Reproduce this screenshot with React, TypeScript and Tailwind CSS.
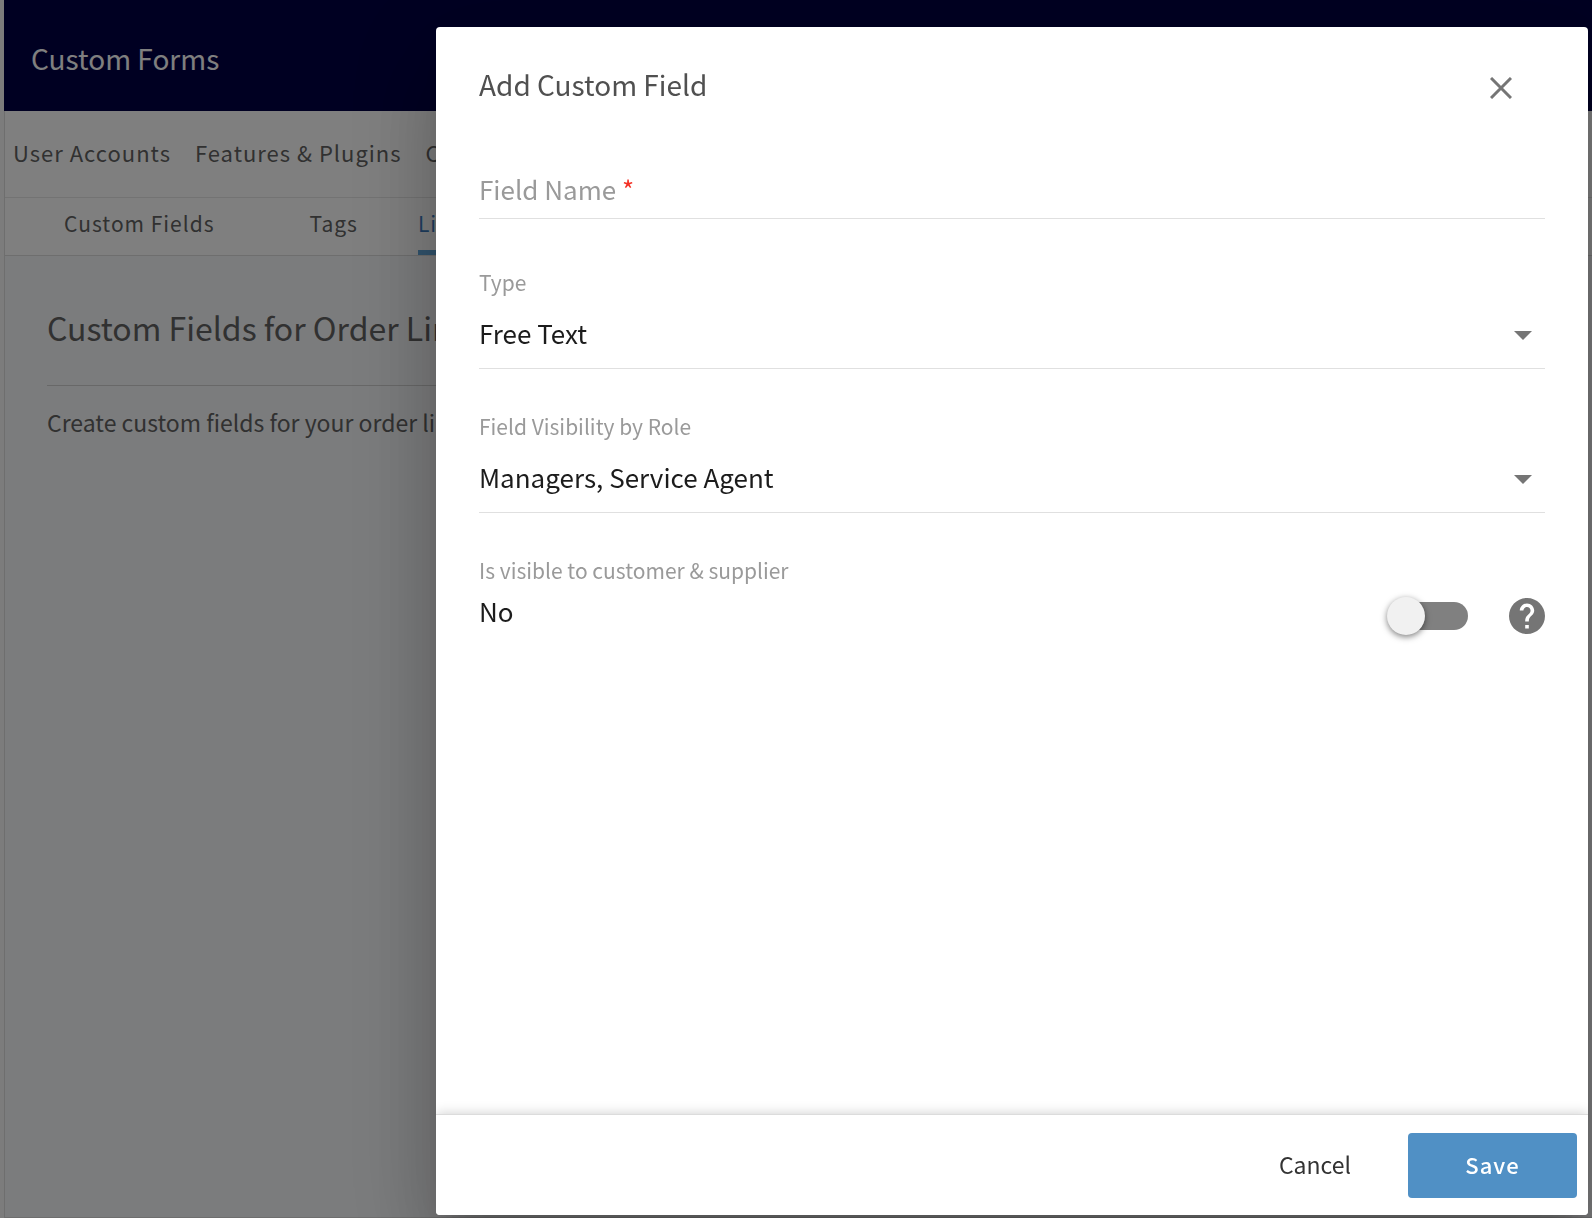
import { useState } from "react";

const navItems = ["User Accounts", "Features & Plugins", "Custom Forms"];

function CloseIcon() {
  return (
    <svg viewBox="0 0 22 22" className="size-[22px]" aria-hidden="true">
      <path d="M1 1 21 21M21 1 1 21" stroke="#757575" strokeWidth="3" fill="none" />
    </svg>
  );
}

function HelpIcon() {
  return (
    <svg viewBox="2 2 20 20" className="size-9" fill="#757575" aria-hidden="true">
      <path d="M12 2C6.48 2 2 6.48 2 12s4.48 10 10 10 10-4.48 10-10S17.52 2 12 2zm1 17h-2v-2h2v2zm2.07-7.75-.9.92C13.45 12.9 13 13.5 13 15h-2v-.5c0-1.1.45-2.1 1.17-2.83l1.24-1.26c.37-.36.59-.86.59-1.41 0-1.1-.9-2-2-2s-2 .9-2 2H8c0-2.21 1.79-4 4-4s4 1.79 4 4c0 .88-.36 1.68-.93 2.25z" />
    </svg>
  );
}

type SelectFieldProps = { id: string; label: string; options: string[] };

function SelectField({ id, label, options }: SelectFieldProps) {
  return (
    <div className="mt-[41px] flex flex-col border-b border-[#e0e0e0]">
      <label htmlFor={id} className="text-[21px] leading-8 text-[#9a9a9a]">
        {label}
      </label>
      <div className="relative my-[17px]">
        <select
          id={id}
          className="block h-9 w-full appearance-none bg-transparent text-[26px] leading-9 text-[#1c1c1c] outline-none"
        >
          {options.map((o) => (
            <option key={o}>{o}</option>
          ))}
        </select>
        <svg
          viewBox="0 0 18 9"
          className="pointer-events-none absolute top-4 right-[13px] h-[9px] w-[18px]"
          fill="#757575"
          aria-hidden="true"
        >
          <path d="M0 0h18L9 9z" />
        </svg>
      </div>
    </div>
  );
}

export default function App() {
  const [name, setName] = useState("");
  const [visible, setVisible] = useState(false);

  return (
    <div className="min-h-screen bg-[#f8f8f8] font-['Noto_Sans_CJK_SC','Noto_Sans',sans-serif] text-[#626262]">
      <div className="ml-1 flex h-screen flex-col overflow-hidden">
        <header className="flex h-[111px] shrink-0 items-center bg-[#000044] px-[27px] pt-1">
          <h1 className="text-[28px] leading-10 whitespace-nowrap text-white">Custom Forms</h1>
        </header>
        <div className="flex min-h-0 grow flex-col border-b border-l border-[#dcdcdc]">
          <nav className="flex h-[87px] shrink-0 items-center gap-6 border-b border-[#e6e6e6] bg-white px-2 pb-1">
            {navItems.map((item) => (
              <a key={item} href="#" className="text-[22px] leading-8 tracking-[1px] whitespace-nowrap">
                {item}
              </a>
            ))}
          </nav>
          <nav className="flex h-[58px] shrink-0 border-b border-[#dcdcdc] bg-white pl-[59px] text-[21px] leading-8 tracking-[1px] whitespace-nowrap">
            <a href="#" className="mr-[95px] pt-[9px]">Custom Fields</a>
            <a href="#" className="mr-[60px] pt-[9px]">Tags</a>
            <a href="#" className="border-b-[5px] border-[#64a8dc] pt-[9px] text-[#3d7cc0]">Line Items</a>
          </nav>
          <main className="grow bg-[#f7f8fa] px-[42px] pt-[47px]">
            <h2 className="border-b border-[#d0d0d0] pb-[34px] text-[32px] leading-12 whitespace-nowrap">
              Custom Fields for Order Line Items
            </h2>
            <p className="pt-[18px] text-[23px] leading-9 whitespace-nowrap">
              Create custom fields for your order lines
            </p>
          </main>
        </div>
      </div>

      <div className="fixed inset-0 flex bg-black/50 pt-[27px] pr-1 pb-[3px] pl-[436px]">
        <form
          role="dialog"
          aria-labelledby="dialog-title"
          onSubmit={(e) => e.preventDefault()}
          className="flex min-w-0 grow flex-col overflow-hidden rounded bg-white shadow-[0_22px_30px_-14px_rgba(0,0,0,0.2),0_48px_76px_6px_rgba(0,0,0,0.14),0_18px_92px_16px_rgba(0,0,0,0.12)]"
        >
          <div className="flex grow flex-col px-[43px]">
            <div className="flex items-center justify-between pt-[37px] pr-[33px]">
              <h2 id="dialog-title" className="text-[28px] leading-10 text-[#505050]">
                Add Custom Field
              </h2>
              <button type="button" aria-label="Close" className="mt-2">
                <CloseIcon />
              </button>
            </div>

            <div className="relative mt-[67px] mb-1.5 border-b border-[#e0e0e0] pb-[11px]">
              <input
                id="field-name"
                value={name}
                onChange={(e) => setName(e.target.value)}
                required
                className="block h-9 w-full bg-transparent text-[26px] leading-9 text-[#1c1c1c] outline-none"
              />
              <label
                htmlFor="field-name"
                className={
                  name
                    ? "absolute -top-8 left-0 text-[21px] leading-8 text-[#9a9a9a]"
                    : "absolute top-0 left-0 text-[26px] leading-9 text-[#9a9a9a]"
                }
              >
                Field Name <span className="text-[#f43025]">*</span>
              </label>
            </div>

            <SelectField id="type" label="Type" options={["Free Text", "Number", "Date"]} />
            <SelectField
              id="roles"
              label="Field Visibility by Role"
              options={["Managers, Service Agent", "Managers", "Service Agent"]}
            />

            <div className="mt-[41px] flex items-end justify-between">
              <div className="flex flex-col pb-[7px]">
                <label htmlFor="visible" className="text-[21px] leading-8 text-[#9a9a9a]">
                  Is visible to customer &amp; supplier
                </label>
                <span className="mt-[7px] text-[26px] leading-9 text-[#1c1c1c]">{visible ? "Yes" : "No"}</span>
              </div>
              <div className="flex items-center gap-[41px]">
                <div className="relative flex h-10 w-[81px] items-center pl-2">
                  <input
                    id="visible"
                    type="checkbox"
                    role="switch"
                    checked={visible}
                    onChange={(e) => setVisible(e.target.checked)}
                    className="peer h-7 w-full cursor-pointer appearance-none rounded-full bg-[#808080]"
                  />
                  <span className="pointer-events-none absolute top-px left-0 size-[38px] rounded-full bg-[#f1f1f1] shadow-[0_2px_6px_rgba(0,0,0,0.5)] peer-checked:left-[43px]" />
                </div>
                <button type="button" aria-label="Help">
                  <HelpIcon />
                </button>
              </div>
            </div>
          </div>

          <div className="flex h-[101px] shrink-0 items-center justify-end gap-[57px] border-t border-[#dcdcdc] bg-white pr-[11px] shadow-[0_0_12px_rgba(0,0,0,0.2)]">
            <button type="button" className="pb-0.5 text-[23px] leading-8 text-[#333333]">
              Cancel
            </button>
            <button
              type="submit"
              className="h-[65px] w-[169px] rounded bg-[#5090c5] pb-0.5 text-[22px] leading-8 font-medium tracking-[1px] text-white"
            >
              Save
            </button>
          </div>
        </form>
      </div>
    </div>
  );
}
